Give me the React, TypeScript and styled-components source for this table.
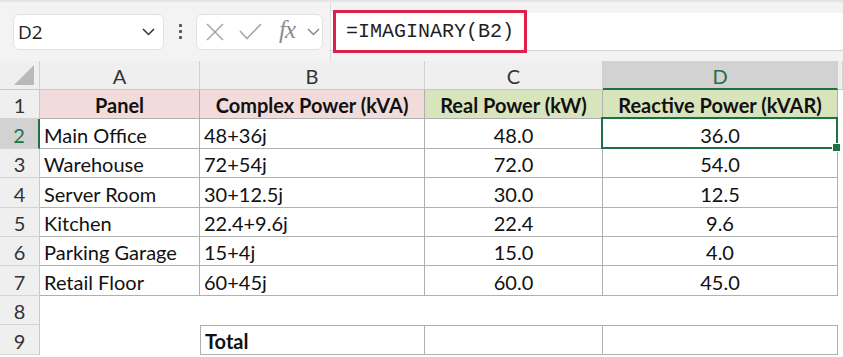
import React from "react";
import styled, { createGlobalStyle, css } from "styled-components";

const GlobalStyle = createGlobalStyle`
  * { box-sizing: border-box; }
  body {
    margin: 0;
    background: #ffffff;
    overflow: hidden;
    font-family: "Lato", "Liberation Sans", sans-serif;
  }
`;

type Row = {
  panel: string;
  complex: string;
  real: string;
  reactive: string;
};

const data: Row[] = [
  { panel: "Main Office", complex: "48+36j", real: "48.0", reactive: "36.0" },
  { panel: "Warehouse", complex: "72+54j", real: "72.0", reactive: "54.0" },
  { panel: "Server Room", complex: "30+12.5j", real: "30.0", reactive: "12.5" },
  { panel: "Kitchen", complex: "22.4+9.6j", real: "22.4", reactive: "9.6" },
  { panel: "Parking Garage", complex: "15+4j", real: "15.0", reactive: "4.0" },
  { panel: "Retail Floor", complex: "60+45j", real: "60.0", reactive: "45.0" },
];

const colLetters = ["A", "B", "C", "D"];

const Chevron = ({ color = "#444" }: { color?: string }) => (
  <svg width="13" height="8" viewBox="0 0 13 8">
    <polyline points="1,1 6.5,6.5 12,1" fill="none" stroke={color} strokeWidth="1.5" />
  </svg>
);

const App: React.FC = () => {
  return (
    <>
      <GlobalStyle />
      <Toolbar>
        <NameBox>
          <NameText>D2</NameText>
          <Chevron color="#333" />
        </NameBox>
        <Dots>
          <span />
          <span />
          <span />
        </Dots>
        <FxBox>
          <svg width="18" height="18" viewBox="0 0 18 18">
            <line x1="1" y1="1" x2="17" y2="17" stroke="#a8a8a8" strokeWidth="1.6" />
            <line x1="17" y1="1" x2="1" y2="17" stroke="#a8a8a8" strokeWidth="1.6" />
          </svg>
          <svg width="23" height="17" viewBox="0 0 23 17">
            <polyline points="1,8 8,15.5 22,1" fill="none" stroke="#a8a8a8" strokeWidth="1.6" />
          </svg>
          <FxLabel>fx</FxLabel>
          <Chevron color="#888" />
        </FxBox>
        <FormulaWrap>
          <FormulaField>
            <Highlight>=IMAGINARY(B2)</Highlight>
          </FormulaField>
        </FormulaWrap>
      </Toolbar>

      <Sheet>
        <Corner>
          <svg width="20" height="20" viewBox="0 0 20 20">
            <polygon points="20,0 20,20 0,20" fill="#b9b9b9" />
          </svg>
        </Corner>
        {colLetters.map((l) => (
          <ColHeader key={l} $active={l === "D"}>
            {l}
          </ColHeader>
        ))}
        <ColHeader />

        <RowHeader>1</RowHeader>
        <Cell $border $fill="#f2dcdb" $bold $center>Panel</Cell>
        <Cell $border $fill="#f2dcdb" $bold $center>Complex Power (kVA)</Cell>
        <Cell $border $fill="#d8e4bc" $bold $center>Real Power (kW)</Cell>
        <Cell $border $fill="#d8e4bc" $bold $center>Reactive Power (kVAR)</Cell>
        <Filler />

        {data.map((r, i) => (
          <React.Fragment key={r.panel}>
            <RowHeader $active={i === 0}>{i + 2}</RowHeader>
            <Cell $border>{r.panel}</Cell>
            <Cell $border>{r.complex}</Cell>
            <Cell $border $center>{r.real}</Cell>
            <Cell $border $center $selected={i === 0}>{r.reactive}</Cell>
            <Filler />
          </React.Fragment>
        ))}

        <RowHeader>8</RowHeader>
        <Cell />
        <Cell />
        <Cell />
        <Cell />
        <Filler />

        <RowHeader>9</RowHeader>
        <Cell />
        <Cell $border $top $left $bold>Total</Cell>
        <Cell $border $top />
        <Cell $border $top />
        <Filler />
      </Sheet>
    </>
  );
};

export default App;

const Toolbar = styled.div`
  height: 61px;
  display: flex;
  align-items: center;
  background: #f3f3f3;
  border-top: 2px solid #e4e4e4;
`;

const NameBox = styled.div`
  margin-left: 13px;
  width: 151px;
  height: 36px;
  display: flex;
  align-items: center;
  justify-content: space-between;
  padding: 0 8px 0 4px;
  background: #ffffff;
  border: 1px solid #e2e2e2;
  border-radius: 6px;
`;

const NameText = styled.span`
  font-family: "Open Sans", "Liberation Sans", sans-serif;
  font-size: 19px;
  color: #222;
`;

const Dots = styled.div`
  width: 32px;
  display: flex;
  flex-direction: column;
  align-items: center;
  gap: 3px;

  span {
    width: 3px;
    height: 3px;
    background: #555;
    border-radius: 1px;
  }
`;

const FxBox = styled.div`
  width: 127px;
  height: 36px;
  display: flex;
  align-items: center;
  padding-left: 9px;
  background: #ffffff;
  border: 1px solid #e2e2e2;
  border-radius: 6px;

  svg:nth-child(2) {
    margin-left: 15px;
  }
  svg:last-child {
    margin-left: 12px;
  }
`;

const FxLabel = styled.span`
  margin-left: 17px;
  margin-top: -3px;
  font-family: "Liberation Serif", "DejaVu Serif", serif;
  font-style: italic;
  font-size: 25px;
  letter-spacing: -1px;
  color: #8c8c8c;
`;

const FormulaWrap = styled.div`
  align-self: stretch;
  flex: 1;
  margin-left: 7px;
  border-left: 1px solid #dddddd;
  display: flex;
  align-items: center;
`;

const FormulaField = styled.div`
  flex: 1;
  height: 38px;
  margin-top: 1px;
  display: flex;
  align-items: center;
  background: #ffffff;
  border-bottom: 1px solid #d4d4d4;
  padding-left: 2px;
`;

const Highlight = styled.div`
  width: 194px;
  height: 43px;
  margin-top: -1px;
  display: flex;
  align-items: center;
  padding-left: 10px;
  border: 3px solid #e0204a;
  font-family: "Liberation Mono", "DejaVu Sans Mono", monospace;
  font-size: 20px;
  color: #1f1f1f;
  white-space: nowrap;
`;

const Sheet = styled.div`
  display: grid;
  grid-template-columns: 40px 160px 225px 178px 235px 1fr;
  grid-template-rows: 29px 29px 30px 29px 30px 29px 29px 30px 29px 30px;
`;

const headerBase = css`
  display: flex;
  align-items: center;
  justify-content: center;
  background: #efefef;
  font-family: "Lato", "Liberation Sans", sans-serif;
  font-size: 20px;
  color: #333;
`;

const Corner = styled.div`
  ${headerBase};
  align-items: flex-end;
  justify-content: flex-end;
  padding: 0 5px 4px 0;
  border-right: 1px solid #d2d2d2;
  border-bottom: 1px solid #c8c8c8;
`;

const ColHeader = styled.div<{ $active?: boolean }>`
  ${headerBase};
  padding-top: 2px;
  border-right: 1px solid #d2d2d2;
  border-bottom: 1px solid #c8c8c8;
  ${(p) =>
    p.$active &&
    css`
      background: #d2d2d2;
      color: #1e7145;
      border-bottom: 2px solid #1e7145;
    `}
`;

const RowHeader = styled.div<{ $active?: boolean }>`
  ${headerBase};
  padding-top: 2px;
  border-right: 1px solid #c8c8c8;
  border-bottom: 1px solid #d4d4d4;
  ${(p) =>
    p.$active &&
    css`
      background: #d2d2d2;
      color: #1e7145;
      border-right: 2px solid #1e7145;
    `}
`;

const Cell = styled.div<{
  $border?: boolean;
  $fill?: string;
  $bold?: boolean;
  $center?: boolean;
  $top?: boolean;
  $left?: boolean;
  $selected?: boolean;
}>`
  position: relative;
  display: flex;
  align-items: center;
  justify-content: ${(p) => (p.$center ? "center" : "flex-start")};
  padding: 2px 4px 0;
  background: ${(p) => p.$fill || "#ffffff"};
  font-family: "Lato", "Liberation Sans", sans-serif;
  font-size: 20px;
  font-weight: ${(p) => (p.$bold ? 700 : 400)};
  color: #111;
  white-space: nowrap;
  ${(p) =>
    p.$border &&
    css`
      border-right: 1px solid #b0b0b0;
      border-bottom: 1px solid #b0b0b0;
    `}
  ${(p) => p.$top && "border-top: 1px solid #b0b0b0;"}
  ${(p) => p.$left && "border-left: 1px solid #b0b0b0;"}
  ${(p) =>
    p.$selected &&
    css`
      &::after {
        content: "";
        position: absolute;
        left: -2px;
        top: -2px;
        right: -1px;
        bottom: -1px;
        border: 2px solid #1e7145;
      }
      &::before {
        content: "";
        position: absolute;
        right: -4px;
        bottom: -4px;
        width: 7px;
        height: 7px;
        background: #1e7145;
        border: 1px solid #ffffff;
        z-index: 1;
      }
    `}
`;

const Filler = styled.div`
  background: #ffffff;
`;
